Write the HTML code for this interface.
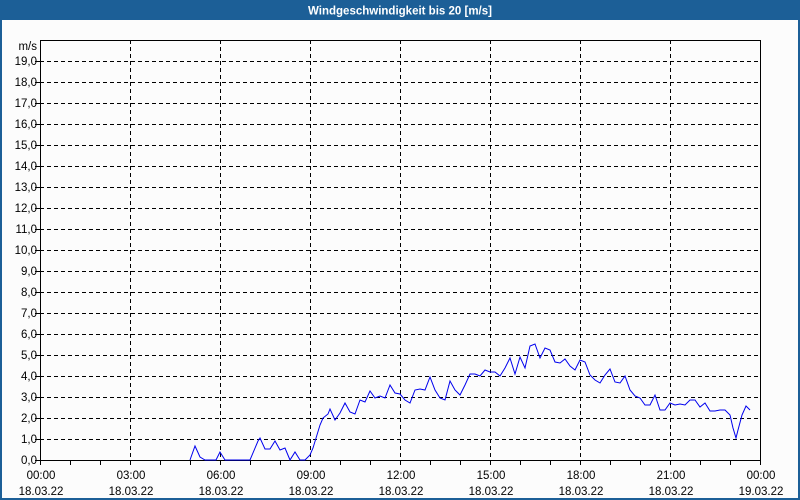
<!DOCTYPE html>
<html><head><meta charset="utf-8"><style>
html,body{margin:0;padding:0;width:800px;height:500px;overflow:hidden;background:#fcfcfc}
svg{display:block;font-family:"Liberation Sans",sans-serif}
</style></head><body>
<svg id="s" width="800" height="500" xmlns="http://www.w3.org/2000/svg">
<rect x="0" y="0" width="800" height="500" fill="#fcfcfc"/>
<rect x="0" y="0" width="800" height="20" fill="#1c5f97"/>
<rect x="0" y="0" width="2" height="500" fill="#1c5f97"/>
<rect x="798" y="0" width="2" height="500" fill="#1c5f97"/>
<rect x="0" y="498" width="800" height="2" fill="#1c5f97"/>
<text x="400" y="14.5" text-anchor="middle" fill="#fff" font-size="11.5" font-weight="bold">Windgeschwindigkeit bis 20 [m/s]</text>
<g id="g"></g>
<polyline fill="none" stroke="#0000ee" stroke-width="1" points="190,460 195,446 200,457 205,460 216,460 220,452 225,460 250,460 258,441 260,438 265,449 270,449 275,441 280,450 285,448 290,460 295,452 300,460 305,460 310,455 313,448 320,425 323,418 328,414 330,409 335,420 340,413 345,403 350,412 355,414 360,400 365,402 370,391 375,398 380,396 385,398 390,385 395,393 400,394 405,400 410,403 415,390 420,389 425,390 430,377 435,390 440,398 445,400 450,381 455,390 460,395 465,385 470,374 475,374 480,376 485,370 490,372 495,372 500,376 505,368 510,358 515,374 520,357 525,368 530,346 535,344 540,358 545,348 550,350 555,362 560,363 565,359 570,366 575,370 580,360 585,362 590,375 595,380 600,383 605,375 610,369 615,382 620,383 625,376 630,390 635,396 640,398 645,405 650,405 655,395 660,410 665,410 670,403 675,405 680,404 685,405 690,400 695,400 700,407 705,403 710,411 715,411 720,410 725,410 730,415 733,428 736,438 738,430 742,415 746,406 750,410"/>
</svg>
<script>
var g=document.getElementById('g'),h='';
for(var i=0;i<20;i++){var y=460-21*i;
 if(i>0)h+='<line x1="40" y1="'+(y+.5)+'" x2="760" y2="'+(y+.5)+'" stroke="#000" stroke-dasharray="4,3"/>';
 h+='<line x1="35" y1="'+(y+.5)+'" x2="40" y2="'+(y+.5)+'" stroke="#000"/>';
 h+='<text x="37" y="'+(y+4)+'" text-anchor="end" font-size="11.5" fill="#000">'+i+',0</text>';}
h+='<text x="37" y="50" text-anchor="end" font-size="11.5" fill="#000">m/s</text>';
var t=['00:00','03:00','06:00','09:00','12:00','15:00','18:00','21:00','00:00'];
for(var j=0;j<9;j++){var x=40+90*j;
 if(j>0&&j<8)h+='<line x1="'+(x+.5)+'" y1="40" x2="'+(x+.5)+'" y2="460" stroke="#000" stroke-dasharray="4,3"/>';
 h+='<text x="'+(x+1)+'" y="479" text-anchor="middle" font-size="11.5" fill="#000">'+t[j]+'</text>';
 h+='<text x="'+(x+1)+'" y="495" text-anchor="middle" font-size="11.5" fill="#000">'+(j==8?'19.03.22':'18.03.22')+'</text>';}
for(var k=0;k<=24;k++){var x=40+30*k;h+='<line x1="'+(x+.5)+'" y1="460" x2="'+(x+.5)+'" y2="465" stroke="#000"/>';}
h+='<rect x="40.5" y="40.5" width="720" height="420" fill="none" stroke="#000"/>';
g.innerHTML=h;
</script>
</body></html>
